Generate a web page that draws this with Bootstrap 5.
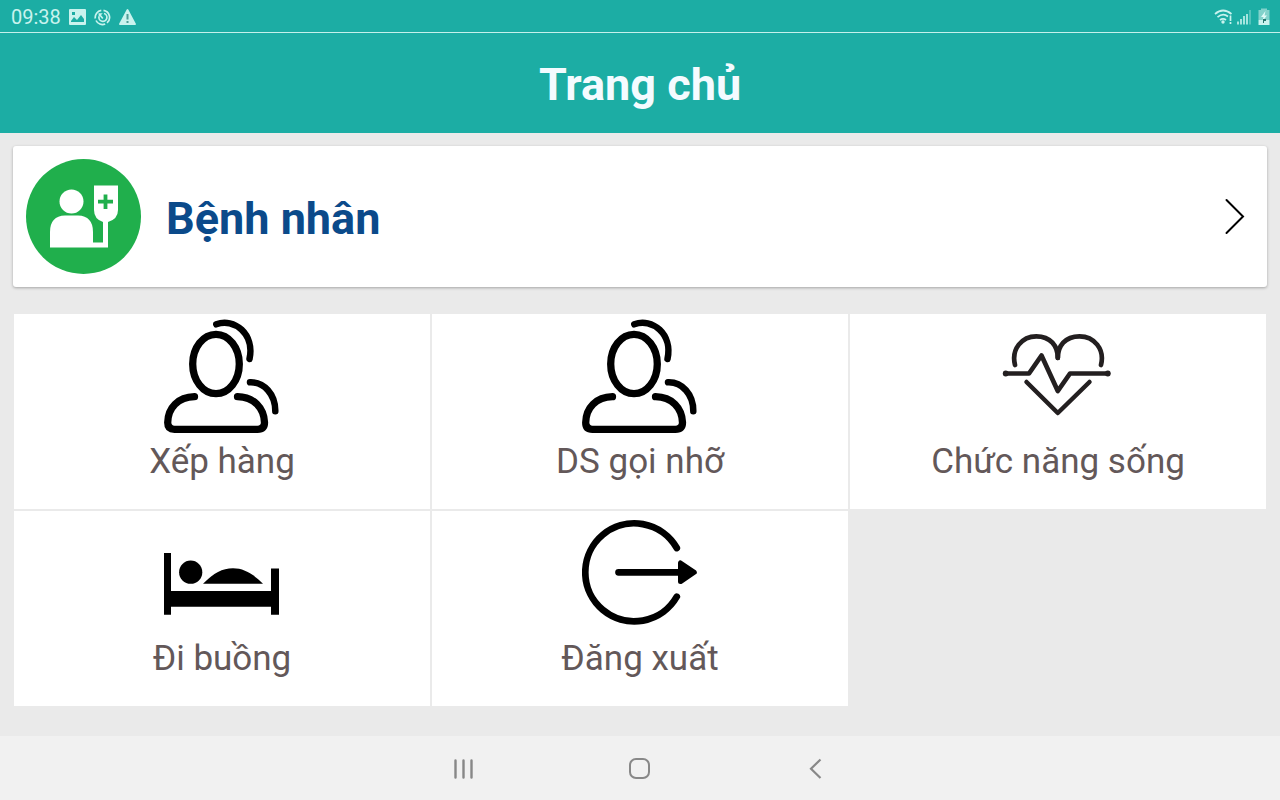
<!DOCTYPE html>
<html lang="vi">
<head>
<meta charset="utf-8">
<meta name="viewport" content="width=device-width, initial-scale=1">
<title>Trang chủ</title>
<link href="https://cdn.jsdelivr.net/npm/bootstrap@5.3.0/dist/css/bootstrap.min.css" rel="stylesheet">
<style>
  body { font-family: Roboto, "Noto Sans", sans-serif; background: #eaeaea; }
  .teal { background: #1cada4; }
  .status-bar { height: 33px; border-bottom: 1px solid #c5f1ec; color: #c9f3ee; font-size: 20px; line-height: 30px; padding: 2px 10px 0 11px; }
  .app-bar { height: 100px; padding-top: 4px; }
  .app-bar h1 { font-size: 45px; line-height: 52px; color: #f4fbff; }
  .page-body { padding: 13px 13px 30px; }
  .patient { border-radius: 3px; padding: 13px 20px 13px 13px; box-shadow: 0 1px 3px rgba(0,0,0,.3); color: #0b4a8a; font-size: 45px; line-height: 52px; }
  .patient-name { margin-left: 25px; padding-top: 4px; }
  .tiles { display: grid; grid-template-columns: repeat(3, 1fr); gap: 2px; margin: 27px 1px 0; }
  .tile { padding: 3px 8px 27px; color: #635859; font-size: 35px; line-height: 41px; gap: 8px; }
  .tile svg { color: #000; }
  .system-nav { height: 64px; background: #f1f1f1; gap: 112px; }
  .system-nav button { width: 64px; height: 64px; color: #888; }
</style>
</head>
<body class="d-flex flex-column min-vh-100">
<div class="status-bar teal d-flex align-items-center justify-content-between">
  <div class="d-flex align-items-center">
    <span class="me-2">09:38</span>
    <svg class="me-2" width="17" height="16" viewBox="0 0 17 16" aria-hidden="true"><path fill="currentColor" fill-rule="evenodd" d="M1 0h15q1 0 1 1v14q0 1-1 1H1q-1 0-1-1V1q0-1 1-1zM2 13h13v-3l-3-4-4 5-3-3-3 4zM3 3v3h3V3z"/></svg>
    <svg class="me-2" width="17" height="17" viewBox="0 0 17 17" fill="none" stroke="currentColor" stroke-width="1.700" aria-hidden="true"><path d="M9.500 1.300a7.200 7.200 0 0 1 3.500 12.600M11.200 15a7.200 7.200 0 0 1-9.200-3.500M1.300 9.500a7.200 7.200 0 0 1 6-8.200"/><path d="M5 7.500a4 4 0 1 0 5-3M8.800 9.500L5.500 5.500"/><path fill="currentColor" stroke="none" d="M4.500 4.200h4.300l-4 4z"/></svg>
    <svg width="17" height="16" viewBox="0 0 17 16" aria-hidden="true"><path fill="currentColor" d="M8.500 0Q9 0 9.400.7L17 15q0 1-1 1H1q-1 0-1-1L7.600.7Q8 0 8.500 0z"/><path fill="#4d9d96" d="M7.500 5h2v5.500h-2zM7.500 12h2v2h-2z"/></svg>
  </div>
  <div class="d-flex align-items-center gap-1">
    <svg width="19" height="16" viewBox="0 0 19 16" fill="none" stroke="currentColor" stroke-width="1.700" aria-hidden="true"><path d="M1 5Q9 -2 17.500 5M3.500 8.200Q9 3.500 14 7.500M6 11q3-2.300 6 0"/><circle cx="9" cy="13" r="1.700" fill="currentColor" stroke="none"/><path d="M16.500 6.500v5.500M16.500 13v2"/></svg>
    <svg width="17" height="16" viewBox="0 0 17 16" stroke="currentColor" stroke-width="1.600" aria-hidden="true"><path d="M1 15.500v-3M4 15.500V10M7 15.500V7M10 15.500V5"/><path d="M13 15.500V1" opacity=".4"/></svg>
    <svg width="12" height="18" viewBox="0 0 12 18" aria-hidden="true"><path fill="#82d2cb" d="M3 2V.5h6V2h2.500v10H.5V2z"/><path fill="currentColor" d="M.5 12h11v5H.5z"/><path fill="#e1fbf8" d="M7.500 3L3 9h2.500L4.500 13 9 7.500H6.500z"/><path fill="#26766f" d="M5 11h3v2H6v2H5z"/></svg>
  </div>
</div>
<header class="app-bar teal d-flex align-items-center justify-content-center">
  <h1 class="fw-bold m-0">Trang chủ</h1>
</header>
<main class="page-body flex-grow-1">
  <a href="#" class="patient bg-white d-flex align-items-center text-decoration-none fw-bold">
    <svg class="flex-shrink-0" width="115" height="115" viewBox="0 0 115 115" aria-hidden="true">
      <circle cx="57.500" cy="57.500" r="57.500" fill="#20af4c"/>
      <g fill="#fff"><circle cx="45.500" cy="42.500" r="12"/><path d="M24 88.500V73q0-16 15-16.500h13q15 .5 15 16.500v10.500h10V63q-9-3-9-12V26.500h24V51q0 9-10 12v25.500z"/></g>
      <path d="M79.500 35.500v14.500M72 42.700h15" stroke="#20af4c" stroke-width="3.800"/>
    </svg>
    <span class="patient-name">Bệnh nhân</span>
    <svg class="ms-auto" width="24" height="40" viewBox="0 0 24 40" fill="none" stroke="#000" stroke-width="2" stroke-linecap="round" aria-hidden="true"><path d="M3.500 3L20 19.500 3.500 36"/></svg>
  </a>
  <nav class="tiles" aria-label="Chức năng">
    <a href="#" class="tile bg-white d-flex flex-column align-items-center text-decoration-none">
      <svg width="116" height="116" viewBox="0 0 116 116" fill="none" stroke="currentColor" stroke-width="7.300" stroke-linecap="round" stroke-linejoin="round" aria-hidden="true"><ellipse cx="52" cy="47" rx="23.300" ry="29.700"/><path d="M30.500 79.700C14 80 4 91 3.700 105.500q0 6.800 6.800 6.800h83q7 0 7-6.800C100 91 90 80 73.500 79.700"/><path d="M52.300 7.300C70 .5 91 17 85.500 42M86 65.300c14-.5 25.500 12 25.300 29" stroke-width="6.500"/></svg>
      <span>Xếp hàng</span>
    </a>
    <a href="#" class="tile bg-white d-flex flex-column align-items-center text-decoration-none">
      <svg width="116" height="116" viewBox="0 0 116 116" fill="none" stroke="currentColor" stroke-width="7.300" stroke-linecap="round" stroke-linejoin="round" aria-hidden="true"><ellipse cx="52" cy="47" rx="23.300" ry="29.700"/><path d="M30.500 79.700C14 80 4 91 3.700 105.500q0 6.800 6.800 6.800h83q7 0 7-6.800C100 91 90 80 73.500 79.700"/><path d="M52.300 7.300C70 .5 91 17 85.500 42M86 65.300c14-.5 25.500 12 25.300 29" stroke-width="6.500"/></svg>
      <span>DS gọi nhỡ</span>
    </a>
    <a href="#" class="tile bg-white d-flex flex-column align-items-center text-decoration-none">
      <svg width="116" height="116" viewBox="0 0 116 116" fill="none" stroke="#231f20" stroke-width="4.700" stroke-linecap="round" stroke-linejoin="round" aria-hidden="true"><path d="M15 48C11 32 22 19.300 36.300 19.300S57.800 29 57.800 41C57.800 29 65 19.300 79.500 19.300S105 32 101 48"/><path d="M57.800 36v5M5.500 56.500H29L41.500 38.500 57.800 74 70 56.500h38"/><path d="M26.500 65l31.300 31L89.500 65" stroke-width="4.500"/><g fill="#231f20" stroke="none"><circle cx="5.700" cy="56.500" r="2.900"/><circle cx="107.800" cy="56.500" r="2.900"/></g></svg>
      <span>Chức năng sống</span>
    </a>
    <a href="#" class="tile bg-white d-flex flex-column align-items-center text-decoration-none">
      <svg width="116" height="116" viewBox="0 0 116 116" fill="currentColor" aria-hidden="true"><path d="M0 39h7v38h100V54.500h8v46.200h-8v-8H7v8H0z"/><circle cx="26.700" cy="58.200" r="11.600"/><path d="M39 69.700C50 59 58 54.300 69 54.300S89 60 99 69.700z"/></svg>
      <span>Đi buồng</span>
    </a>
    <a href="#" class="tile bg-white d-flex flex-column align-items-center text-decoration-none">
      <svg width="116" height="116" viewBox="0 0 116 116" fill="none" stroke="currentColor" stroke-width="6.700" stroke-linecap="round" stroke-linejoin="round" aria-hidden="true"><path d="M94.800 34A49 49 0 1 0 94.800 82.700M36.500 58.300H98"/><path d="M98.500 49v18.600l13.800-9.300z" fill="currentColor" stroke-width="5"/></svg>
      <span>Đăng xuất</span>
    </a>
  </nav>
</main>
<footer class="system-nav d-flex justify-content-center">
  <button type="button" class="btn p-0 border-0 rounded-0" aria-label="Ứng dụng gần đây"><svg width="22" height="22" viewBox="0 0 22 22" fill="none" stroke="currentColor" stroke-width="2.400" stroke-linecap="round"><path d="M2.500 2.500v17M10.500 2.500v17M18.500 2.500v17"/></svg></button>
  <button type="button" class="btn p-0 border-0 rounded-0" aria-label="Màn hình chính"><svg width="22" height="22" viewBox="0 0 22 22" fill="none" stroke="currentColor" stroke-width="2"><rect x="1" y="1" width="19" height="19" rx="6"/></svg></button>
  <button type="button" class="btn p-0 border-0 rounded-0" aria-label="Quay lại"><svg width="22" height="22" viewBox="0 0 22 22" fill="none" stroke="currentColor" stroke-width="2.200"><path d="M15.500 1.500L6 10.700 15.500 20"/></svg></button>
</footer>
<script src="https://cdn.jsdelivr.net/npm/bootstrap@5.3.0/dist/js/bootstrap.bundle.min.js"></script>
</body>
</html>
